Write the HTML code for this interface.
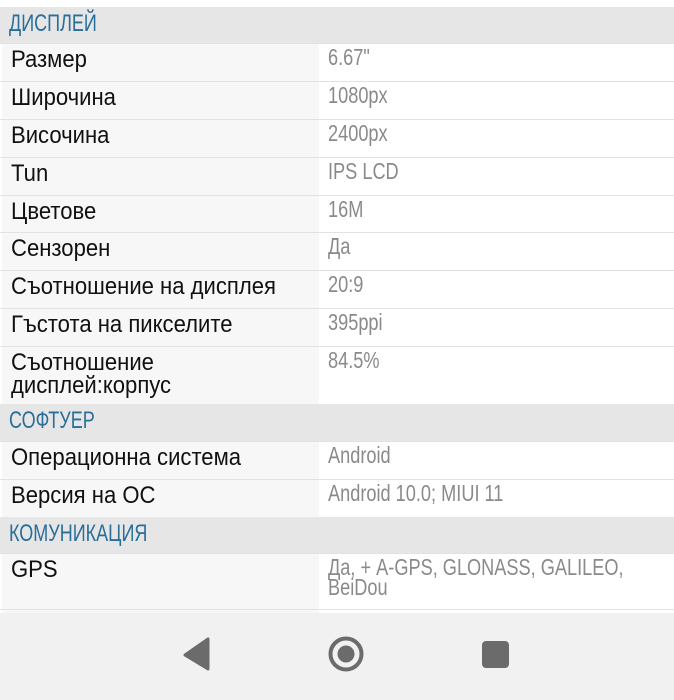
<!DOCTYPE html>
<html><head><meta charset="utf-8"><style>
body{margin:0;width:674px;height:700px;overflow:hidden;background:#fff;font-family:"Liberation Sans Narrow","Liberation Sans",sans-serif;}
.t{display:inline-block;transform:scaleX(.92);transform-origin:0 0;white-space:nowrap;}
.v .t{transform:scaleX(.79);}
.h .t{transform:scaleX(.75);}
.h{position:absolute;left:0;width:674px;background:#e6e6e6;color:#2a6e9a;font-size:24px;padding-left:9px;box-sizing:border-box;line-height:34px;}
.r{position:absolute;left:0;width:674px;border-top:1px solid #e2e2e2;box-sizing:border-box;}
.l{position:absolute;left:2px;top:0;bottom:0;width:317px;background:#f7f7f7;color:#111;font-size:24px;padding:4px 0 0 9px;box-sizing:border-box;line-height:23px;}
.v{position:absolute;left:320px;top:0;bottom:0;right:0;background:#fff;color:#8a8a8a;font-size:23px;padding:3px 0 0 8px;box-sizing:border-box;line-height:20px;}
.nav{position:absolute;left:0;top:613px;width:674px;height:87px;background:#f1f1f1;}
</style></head><body>
<div class="h" style="top:7px;height:36px;"><span class="t">ДИСПЛЕЙ</span></div>
<div class="r" style="top:43px;height:38px"><div class="l"><span class="t">Размер</span></div><div class="v"><span class="t">6.67"</span></div></div>
<div class="r" style="top:81px;height:38px"><div class="l"><span class="t">Широчина</span></div><div class="v"><span class="t">1080px</span></div></div>
<div class="r" style="top:119px;height:38px"><div class="l"><span class="t">Височина</span></div><div class="v"><span class="t">2400px</span></div></div>
<div class="r" style="top:157px;height:38px"><div class="l"><span class="t">Tun</span></div><div class="v"><span class="t">IPS LCD</span></div></div>
<div class="r" style="top:195px;height:37px"><div class="l"><span class="t">Цветове</span></div><div class="v"><span class="t">16M</span></div></div>
<div class="r" style="top:232px;height:38px"><div class="l"><span class="t">Сензорен</span></div><div class="v"><span class="t">Да</span></div></div>
<div class="r" style="top:270px;height:38px"><div class="l"><span class="t">Съотношение на дисплея</span></div><div class="v"><span class="t">20:9</span></div></div>
<div class="r" style="top:308px;height:38px"><div class="l"><span class="t">Гъстота на пикселите</span></div><div class="v"><span class="t">395ppi</span></div></div>
<div class="r" style="top:346px;height:58px"><div class="l"><span class="t">Съотношение<br>дисплей:корпус</span></div><div class="v"><span class="t">84.5%</span></div></div>
<div class="h" style="top:404px;height:37px;"><span class="t">СОФТУЕР</span></div>
<div class="r" style="top:441px;height:38px"><div class="l"><span class="t">Операционна система</span></div><div class="v"><span class="t">Android</span></div></div>
<div class="r" style="top:479px;height:38px"><div class="l"><span class="t">Версия на ОС</span></div><div class="v"><span class="t">Android 10.0; MIUI 11</span></div></div>
<div class="h" style="top:517px;height:36px;"><span class="t">КОМУНИКАЦИЯ</span></div>
<div class="r" style="top:553px;height:56px"><div class="l"><span class="t">GPS</span></div><div class="v"><span class="t">Да, + A-GPS, GLONASS, GALILEO,<br>BeiDou</span></div></div>
<div class="r" style="top:609px;height:6px"><div class="l"></div><div class="v"></div></div>
<div class="nav">
<svg width="674" height="87" style="position:absolute;left:0;top:0">
<path d="M208 26 L208 56 L185 42 Z" fill="#6b6b6b" stroke="#6b6b6b" stroke-width="3" stroke-linejoin="round"/>
<circle cx="346" cy="41" r="15.5" fill="none" stroke="#6b6b6b" stroke-width="4"/>
<circle cx="346" cy="41" r="8.5" fill="#6b6b6b"/>
<rect x="482" y="28" width="27" height="27" rx="4" fill="#6b6b6b"/>
</svg>
</div>
</body></html>
